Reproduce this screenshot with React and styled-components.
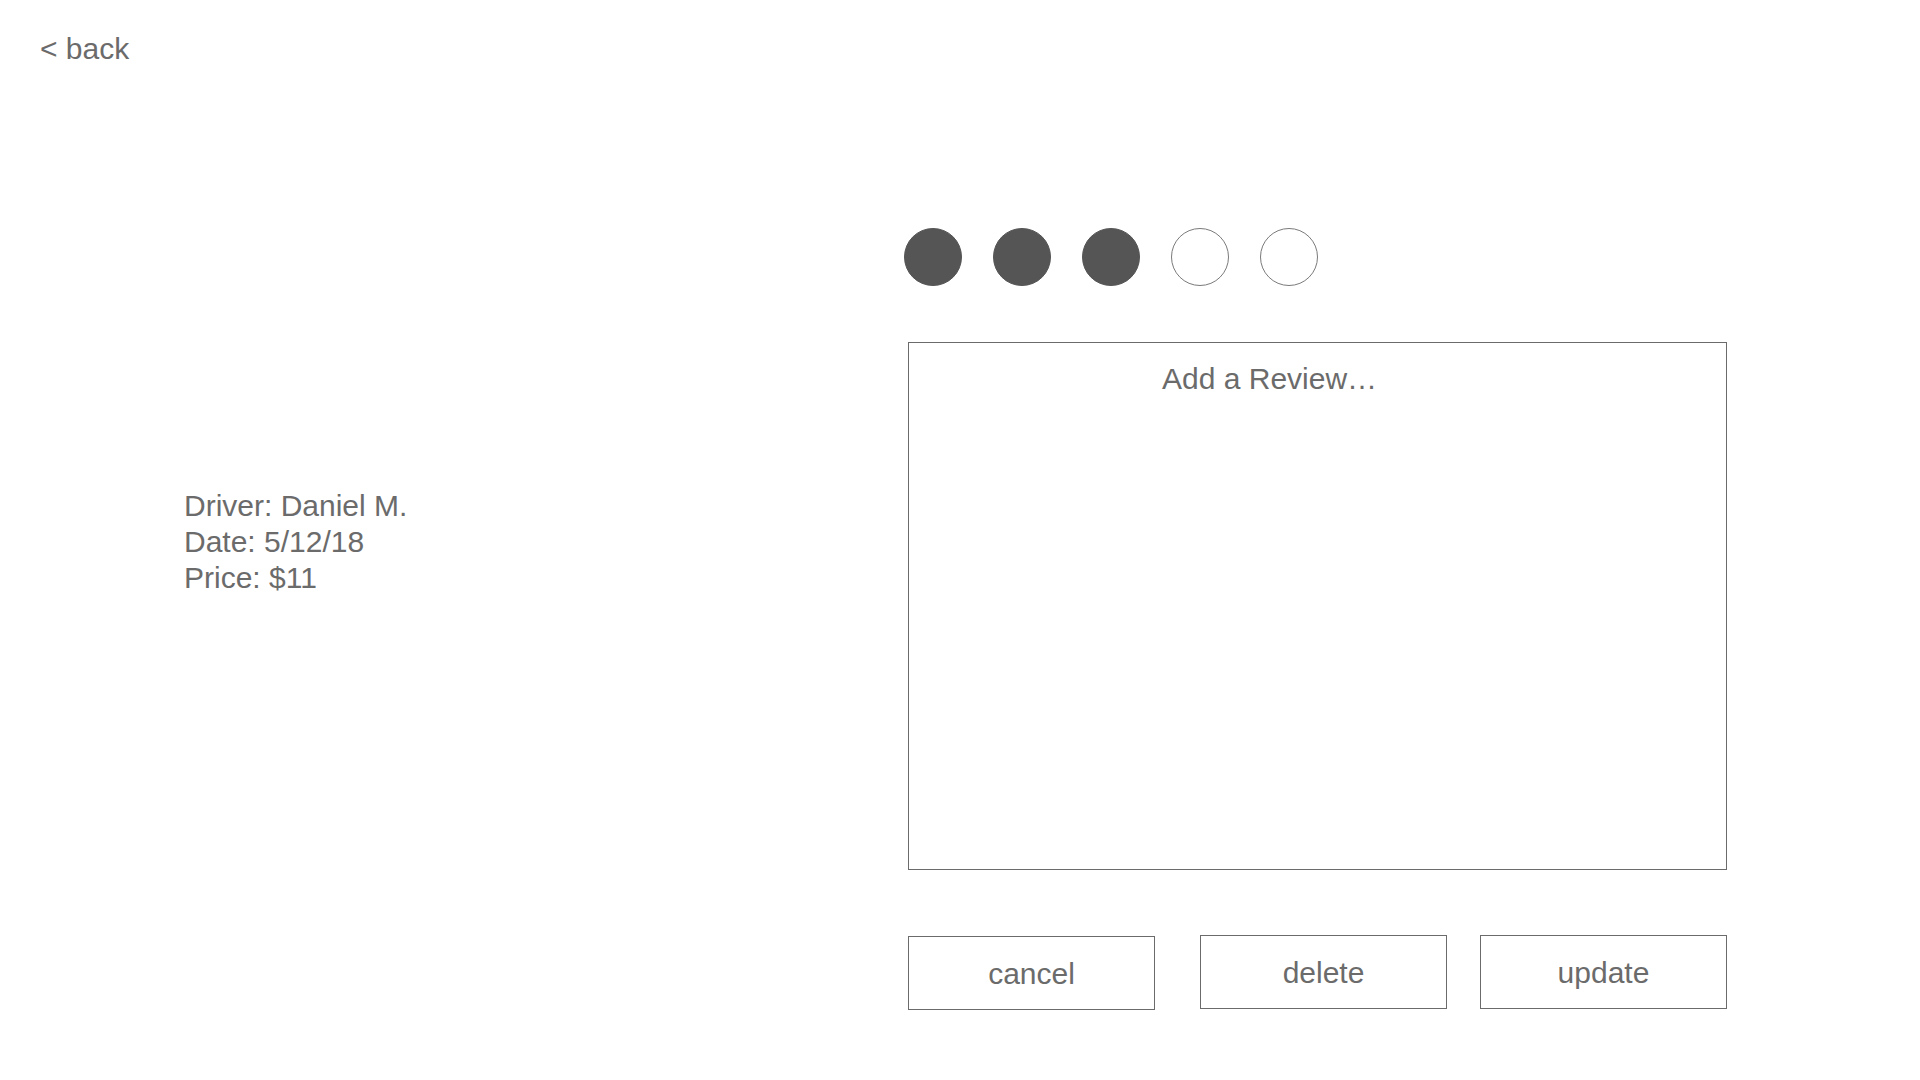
import React from "react";
import styled, { createGlobalStyle } from "styled-components";

const GlobalStyle = createGlobalStyle`
  html, body {
    margin: 0;
    padding: 0;
    background: #ffffff;
  }
  body {
    font-family: "Liberation Sans", Helvetica, Arial, sans-serif;
    color: #6b6b6b;
  }
`;

const Page = styled.div`
  width: 1920px;
  min-height: 1080px;
  display: flex;
  flex-direction: column;
  box-sizing: border-box;
`;

const Header = styled.header`
  padding: 32px 0 0 40px;
`;

const BackLink = styled.a`
  display: inline-block;
  font-size: 30px;
  line-height: 34px;
  color: #6b6b6b;
  text-decoration: none;
  cursor: pointer;
`;

const Main = styled.main`
  display: flex;
  padding-left: 184px;
`;

const InfoColumn = styled.section`
  width: 720px;
  padding-top: 422px;
`;

const InfoLine = styled.div`
  font-size: 30px;
  line-height: 36px;
  color: #6b6b6b;
`;

const ReviewColumn = styled.section`
  display: flex;
  flex-direction: column;
  padding-top: 162px;
`;

const Rating = styled.div`
  display: flex;
  gap: 31px;
`;

const Dot = styled.span`
  width: 58px;
  height: 58px;
  border-radius: 50%;
  box-sizing: border-box;
  background: ${(p) => (p.$filled ? "#555555" : "#ffffff")};
  border: 1px solid ${(p) => (p.$filled ? "#555555" : "#7a7a7a")};
`;

const ReviewBox = styled.div`
  margin: 56px 0 0 4px;
  width: 819px;
  height: 528px;
  box-sizing: border-box;
  border: 1px solid #6b6b6b;
  padding: 19px 0 0 253px;
  font-size: 30px;
  line-height: 34px;
  color: #6b6b6b;
`;

const Actions = styled.div`
  display: flex;
  align-items: flex-start;
  margin: 65px 0 0 4px;
`;

const ActionButton = styled.button`
  width: 247px;
  height: 74px;
  box-sizing: border-box;
  margin-left: ${(p) => p.$gap || 0}px;
  margin-top: ${(p) => p.$drop || 0}px;
  border: 1px solid #6b6b6b;
  background: #ffffff;
  font-family: "Liberation Sans", Helvetica, Arial, sans-serif;
  font-size: 30px;
  color: #6b6b6b;
  padding: 2px 0 0;
  cursor: pointer;
`;

export default function App() {
  const rating = 3;
  return (
    <>
      <GlobalStyle />
      <Page>
        <Header>
          <BackLink>&lt; back</BackLink>
        </Header>
        <Main>
          <InfoColumn>
            <InfoLine>Driver: Daniel M.</InfoLine>
            <InfoLine>Date: 5/12/18</InfoLine>
            <InfoLine>Price: $11</InfoLine>
          </InfoColumn>
          <ReviewColumn>
            <Rating>
              {[1, 2, 3, 4, 5].map((n) => (
                <Dot key={n} $filled={n <= rating} />
              ))}
            </Rating>
            <ReviewBox>Add a Review…</ReviewBox>
            <Actions>
              <ActionButton $drop={1}>cancel</ActionButton>
              <ActionButton $gap={45}>delete</ActionButton>
              <ActionButton $gap={33}>update</ActionButton>
            </Actions>
          </ReviewColumn>
        </Main>
      </Page>
    </>
  );
}
